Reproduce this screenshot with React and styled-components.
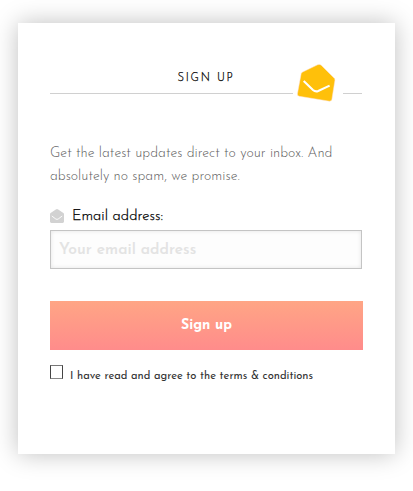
import React from "react";
import styled, { createGlobalStyle } from "styled-components";

const GlobalStyle = createGlobalStyle`
  *, *::before, *::after { box-sizing: border-box; }
  body { margin: 0; background: #fff; font-family: "Josefin Sans", Lato, sans-serif; }
`;

const Page = styled.main`
  min-height: 491px;
  padding: 23px 18px 37px;
`;

const Card = styled.section`
  height: 431px;
  padding: 44px 32px 0;
  background: #fff;
  box-shadow: 0 0 23px rgba(0, 0, 0, 0.25);
`;

const Header = styled.header`
  position: relative;
  width: 312px;
  height: 27px;
  border-bottom: 1px solid #d0d0d0;
`;

const Title = styled.h1`
  margin: 0;
  padding-top: 1px;
  font-size: 11.2px;
  line-height: 21px;
  font-weight: 300;
  letter-spacing: 1.8px;
  text-align: center;
  color: #000;
  -webkit-text-stroke: 0.25px #000;
`;

const Badge = styled.div`
  position: absolute;
  left: 243px;
  top: -5px;
  width: 50px;
  height: 42px;
  background: #fff;

  svg { display: block; }
`;

const Intro = styled.p`
  margin: 48px 0 0;
  font-size: 14px;
  line-height: 23px;
  font-weight: 300;
  color: #606060;
`;

const Label = styled.label`
  display: flex;
  align-items: center;
  gap: 8px;
  height: 20px;
  margin-top: 18px;
  font-size: 14.8px;
  font-weight: 300;
  color: #000;
  -webkit-text-stroke: 0.25px #000;
`;

const Input = styled.input`
  display: block;
  width: 312px;
  height: 39px;
  margin: 4px 0 0;
  padding: 0 8px;
  border: 1px solid #c4c4c4;
  border-radius: 0;
  outline: none;
  background: #fdfdfd;
  box-shadow: inset 0 0 4px rgba(0, 0, 0, 0.1);
  font: 600 15.6px "Josefin Sans", Lato, sans-serif;

  &::placeholder { color: #e3e3e3; opacity: 1; }
`;

const Button = styled.button`
  display: block;
  width: 313px;
  height: 49px;
  margin: 32px 0 0;
  padding: 0;
  border: 0;
  background: linear-gradient(#ffa585, #ff8c8b);
  color: #fff;
  font: 700 14px "Josefin Sans", Lato, sans-serif;
`;

const Terms = styled.label`
  display: flex;
  align-items: flex-start;
  gap: 7px;
  margin-top: 15px;
  font-size: 11.2px;
  line-height: 23px;
  font-weight: 400;
  color: #333;
  white-space: nowrap;
`;

const Checkbox = styled.input`
  appearance: none;
  flex: none;
  width: 13px;
  height: 14px;
  margin: 0;
  border: 1px solid #444;
  border-bottom-color: #888;
  border-top-color: #777;
  background: #fff;
`;

function LargeEnvelope() {
  return (
    <svg width="50" height="42" viewBox="0 0 50 42" aria-hidden="true">
      <path
        d="M8.2 11.4Q8.5 10.6 9.6 10L24.6 2.8Q26.6 1.9 28 3L41.3 16.3Q42 17.1 41.9 18.5L38.9 37.2Q38.5 39.4 36.4 39.2L6.2 34.3Q4.1 33.9 4.4 31.9Z"
        fill="#ffc00a"
        stroke="#ffe3da"
        strokeWidth="0.5"
      />
      <path d="M10.7 19L20 28Q22.4 30.2 25.2 29L36.6 23.6" fill="none" stroke="#fff" strokeWidth="2.1" />
    </svg>
  );
}

function SmallEnvelope() {
  return (
    <svg width="14" height="14" viewBox="0 0 14 14" aria-hidden="true">
      <path d="M0 5Q0 4.3.6 3.9L5.8.4Q7 -.2 8.2.4L13.4 3.9Q14 4.3 14 5V12.6Q14 14 12.6 14H1.4Q0 14 0 12.6Z" fill="#d2d2d2" />
      <path d="M1.8 7L5.8 10Q7 10.8 8.2 10L12.2 7" fill="none" stroke="#fff" strokeWidth="0.9" />
    </svg>
  );
}

export default function App() {
  return (
    <>
      <GlobalStyle />
      <Page>
        <Card>
          <Header>
            <Title>SIGN UP</Title>
            <Badge><LargeEnvelope /></Badge>
          </Header>
          <Intro>Get the latest updates direct to your inbox. And absolutely no spam, we promise.</Intro>
          <Label htmlFor="email"><SmallEnvelope />Email address:</Label>
          <Input id="email" type="email" placeholder="Your email address" />
          <Button type="button">Sign up</Button>
          <Terms>
            <Checkbox type="checkbox" />
            I have read and agree to the terms &amp; conditions
          </Terms>
        </Card>
      </Page>
    </>
  );
}
